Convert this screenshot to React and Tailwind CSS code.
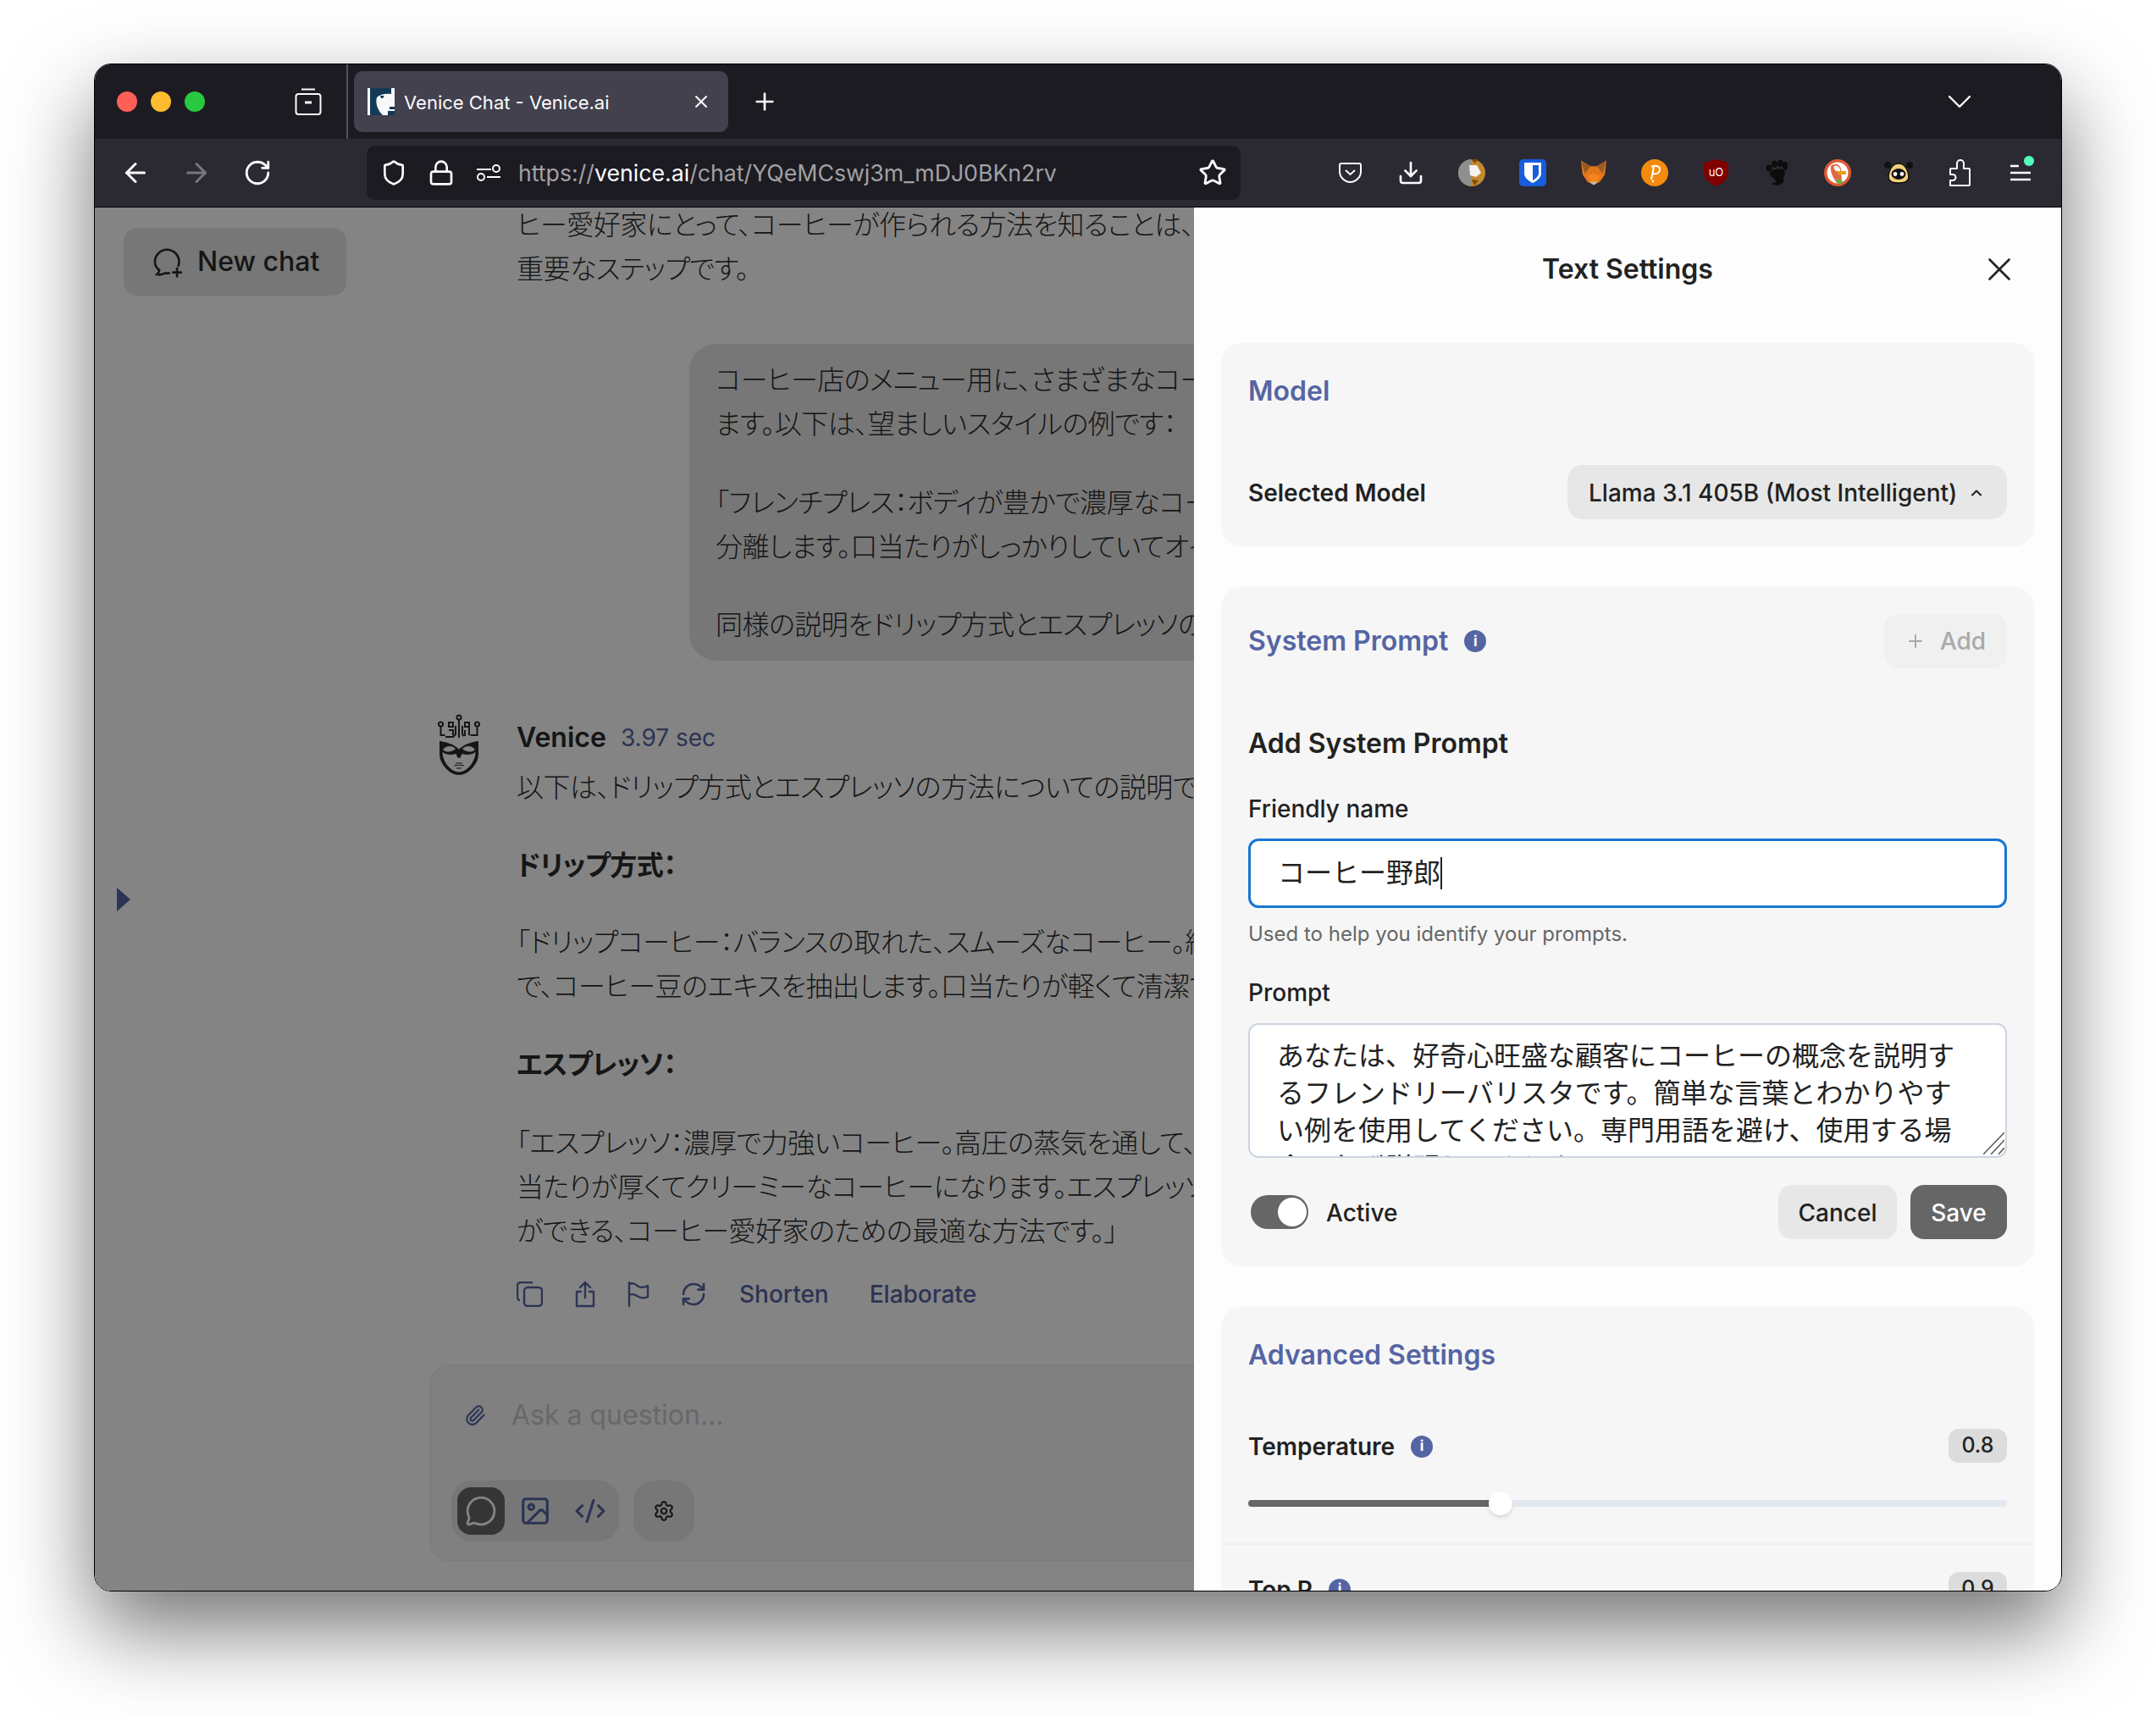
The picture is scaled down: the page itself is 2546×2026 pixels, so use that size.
import React from 'react';
import {
  ArrowLeft, ArrowRight, RotateCw, Shield, Lock, Star, Download, X, Plus, ChevronDown, ChevronUp,
  RefreshCw, Paperclip, MessageCircle, Image, CodeXml, Settings,
} from 'lucide-react';

const SANS = "font-['Inter','Noto_Sans_CJK_JP',sans-serif]";

function MaskLogo() {
  return (
    <svg width="50" height="72" viewBox="0 0 50 72" fill="none" stroke="#2b2b2b" strokeWidth="2">
      <circle cx="25" cy="4" r="2.6" />
      <circle cx="3.500" cy="12" r="2.6" />
      <circle cx="46.500" cy="12" r="2.6" />
      <rect x="13" y="10" width="5" height="5" />
      <rect x="32" y="10" width="5" height="5" />
      <path d="M25 7v21M21 14v10l-3 3h-9M29 14v10l2 2M3.500 15v10h5M46.500 15v10h-8M13 19h5v6M37 15v10M32 19v7" />
      <path d="M3 33c7 1 16 4 22 10 6-6 15-9 22-10v14c0 12-12 24-22 24S3 59 3 47z" fill="#2b2b2b" />
      <path d="M5.500 45c4 3 10 4 16 2 1 3 2 5 3.500 5s2.500-2 3.500-5c6 2 12 1 16-2 0 11-10 23.500-19.500 23.500S5.500 56 5.500 45z" fill="#fdfdfd" stroke="none" />
      <path d="M6 42c4-5 11-5 15-1-4 4-11 5-15 1zM29 41c4-4 11-4 15 1-4 4-11 3-15-1z" fill="#fdfdfd" stroke="none" />
      <path d="M21 58h8M19 61c4-1 8-1 12 0M22 64h6" strokeWidth="1.2" />
    </svg>
  );
}

function TabFavicon() {
  return (
    <svg width="32" height="32" viewBox="0 0 32 32" className="shrink-0">
      <rect width="32" height="32" fill="#f8f9fa" />
      <path d="M3 0h25v7c-6-1-13 0-17 4-2 7 1 15 7 21H3z" fill="#123a57" />
      <path d="M12 10c3-2 6-2 9 0-2 3-6 3-9 0z" fill="#f8f9fa" />
      <path d="M15 9h5l-2 3h-2z" fill="#123a57" />
      <path d="M26 22h6v3h-6zM24 27h8v5h-8z" fill="#123a57" />
      <path d="M0 14l3 2v6l-3-2z" fill="#f8f9fa" />
    </svg>
  );
}

function Lion() {
  return (
    <svg width="32" height="32" viewBox="0 0 32 32">
      <circle cx="16" cy="16" r="16" fill="#c4882e" />
      <path d="M15 0C6 1 0 8 0 16s6 15 15 16z" fill="#8f8f8f" />
      <path d="M13 7h9l5 9-6 5-7-2z" fill="#f3f3f3" />
      <path d="M15 0h8l-3 5zM16 24l8 1-5 6z" fill="#7a4d14" />
    </svg>
  );
}

function Bitwarden() {
  return (
    <svg width="32" height="32" viewBox="0 0 32 32">
      <rect width="32" height="32" rx="5" fill="#175ddc" />
      <path d="M6 4h20v13c0 5-6 9-10 11-4-2-10-6-10-11z" fill="#fff" />
      <path d="M16 7h7v10c0 3-4 6-7 8z" fill="#175ddc" />
    </svg>
  );
}

function Fox() {
  return (
    <svg width="32" height="32" viewBox="0 0 34 46" preserveAspectRatio="none">
      <path d="M1 2l12 10h8L33 2l-2 24-6 12-8 6-8-6-6-12z" fill="#e2761b" />
      <path d="M1 2l12 10-7 12zM33 2L21 12l7 12z" fill="#9a5a24" />
      <path d="M17 24l-8 4 4 10h8l4-10z" fill="#f6851b" />
      <path d="M12 38h10l-5 6z" fill="#c0c0b0" />
    </svg>
  );
}

function Polka() {
  return (
    <svg width="32" height="32" viewBox="0 0 32 32">
      <circle cx="16" cy="16" r="16" fill="#f48b0c" />
      <path d="M12 24l3-15M12 9c6-3 11 0 10 4s-5 5-9 4" fill="none" stroke="#fff" strokeWidth="2" />
      <circle cx="14" cy="26" r="1.300" fill="#fff" />
    </svg>
  );
}

function UBlock() {
  return (
    <svg width="29" height="32" viewBox="0 0 29 32">
      <path d="M14.500 0L29 4v12c0 7-7 13-14.500 16C7 29 0 23 0 16V4z" fill="#800000" />
      <text x="14.500" y="20" textAnchor="middle" fontSize="13" fontFamily="Inter" fill="#fff">uO</text>
    </svg>
  );
}

function Foot() {
  return (
    <svg width="26" height="30" viewBox="0 0 26 44" preserveAspectRatio="none" fill="#0c0c0c">
      <ellipse cx="4" cy="14" rx="3.500" ry="6" />
      <ellipse cx="10.500" cy="7" rx="3.500" ry="6" />
      <ellipse cx="17.500" cy="6" rx="3.500" ry="6" />
      <ellipse cx="23" cy="10" rx="3" ry="7" />
      <path d="M12 16c8-3 13 3 10 11-2 5 0 8-1 11-2 6-12 8-14 2 3 0 6-1 5-4-1-5-8-7-7-13 0-4 3-6 7-7z" />
    </svg>
  );
}

function Duck() {
  return (
    <svg width="32" height="32" viewBox="0 0 32 32">
      <circle cx="16" cy="16" r="16" fill="#de5833" />
      <circle cx="16" cy="16" r="12.500" fill="#fff" />
      <path d="M8 8c4-4 11-3 12 4l1 15-6 1c-4-6-8-12-7-20z" fill="#de5833" opacity="0.9" />
      <path d="M12 8c3-1 6 0 7 4v2h-5c-2-2-3-4-2-6z" fill="#fff" />
      <path d="M15 14h11v4h-9z" fill="#e5a00d" />
      <path d="M15 23l7 3-2 3-5-1z" fill="#4cba3c" />
    </svg>
  );
}

function Goggles() {
  return (
    <svg width="34" height="26" viewBox="0 0 34 26">
      <circle cx="4" cy="4" r="4" fill="#111" />
      <circle cx="30" cy="4" r="4" fill="#111" />
      <path d="M17 2c6 0 9 4 11 10 2 7 2 13-11 13S4 19 6 12C8 6 11 2 17 2z" fill="#f4cf7b" stroke="#111" strokeWidth="1.500" />
      <ellipse cx="17" cy="14.500" rx="8.500" ry="6.500" fill="#111" />
      <circle cx="13" cy="14.500" r="2.400" fill="#fff" />
      <circle cx="21" cy="14.500" r="2.400" fill="#fff" />
    </svg>
  );
}

function Pocket() {
  return (
    <svg width="27" height="24" viewBox="0 0 27 24" fill="none" stroke="#fbfbfe" strokeWidth="2">
      <path d="M3 1h21a2 2 0 012 2v8c0 6-6 12-12.500 12S1 17 1 11V3a2 2 0 012-2z" />
      <path d="M8 9l5.500 5L19 9" />
    </svg>
  );
}

function Sliders() {
  return (
    <svg width="28" height="20" viewBox="0 0 28 20" fill="none" stroke="#fbfbfe" strokeWidth="2">
      <path d="M0 6h17M12 15h16" />
      <circle cx="23" cy="5" r="4" />
      <circle cx="5" cy="15" r="4" />
    </svg>
  );
}

function FirefoxView() {
  return (
    <svg width="32" height="32" viewBox="0 0 32 32" fill="none" stroke="#fbfbfe" strokeWidth="2">
      <path d="M8 1.500h16" />
      <rect x="1.500" y="7" width="29" height="24" rx="3" />
      <path d="M12 17h8" strokeWidth="3" />
    </svg>
  );
}

function ExtensionPiece() {
  return (
    <svg width="28" height="32" viewBox="0 0 28 32" fill="none" stroke="#fbfbfe" strokeWidth="2" strokeLinejoin="round">
      <path d="M3 31h22a1 1 0 001-1V12a1 1 0 00-1-1h-6V5a4 4 0 00-8 0v6H4a1 1 0 00-1 1v6h3a3.500 3.500 0 010 7H3z" />
    </svg>
  );
}

function ChatLine({ bold = false, className = '', children }) {
  return (
    <p className={`h-[52px] text-[32px] leading-[52px] tracking-[-0.5px] whitespace-nowrap text-[#2b2b2b] [font-feature-settings:'palt'] ${bold ? 'font-bold' : 'font-light'} ${className}`}>
      {children}
    </p>
  );
}

function InfoDot() {
  return (
    <span className="flex h-[26px] w-[26px] items-center justify-center rounded-full bg-[#5565a3] text-[17px] font-bold leading-none text-white">i</span>
  );
}

function Card({ children }) {
  return <section className="rounded-[24px] bg-[#f6f6f6] px-[32px]">{children}</section>;
}

function Sidebar() {
  return (
    <aside className="w-[395px] shrink-0 pl-[34px] pt-[24px]">
      <button className="flex h-[80px] w-[263px] items-center gap-[16px] rounded-[16px] bg-[#e4e4e4] pl-[33px] text-[32px] font-medium text-[#2b2b2b]">
        <svg width="38" height="38" viewBox="0 0 24 24" fill="none" stroke="#2b2b2b" strokeWidth="1.7" strokeLinecap="round">
          <path d="M13 20.500c-1 .2-2 .2-3 0-1.500 1-3.500 1.500-6 1 1-1 1.700-2 1.800-3.200C3.500 16.700 2.500 14.500 2.500 12a9 9 0 0118 0c0 1-.2 2-.5 3" />
          <path d="M19 17v6M16 20h6" />
        </svg>
        New chat
      </button>
      <svg width="16" height="28" viewBox="0 0 16 28" className="ml-[-8px] mt-[699px]"><path d="M0 0l16 14L0 28z" fill="#5565a3" /></svg>
    </aside>
  );
}

function ChatColumn() {
  return (
    <main className="min-w-[1400px] flex-1 pl-[103px]">
      <div className="mt-[-5px]">
        <ChatLine>ヒー愛好家にとって、コーヒーが作られる方法を知ることは、</ChatLine>
        <ChatLine>重要なステップです。</ChatLine>
      </div>
      <div className="ml-[204px] mt-[62px] w-[900px] rounded-[32px] bg-[#e4e4e4] pb-[16px] pl-[31px] pt-[17px]">
        <ChatLine>コーヒー店のメニュー用に、さまざまなコーヒーの説明を作成してい</ChatLine>
        <ChatLine>ます。以下は、望ましいスタイルの例です：</ChatLine>
        <ChatLine className="mt-[41px]">「フレンチプレス：ボディが豊かで濃厚なコーヒー。</ChatLine>
        <ChatLine>分離します。口当たりがしっかりしていてオイリーです。</ChatLine>
        <ChatLine className="mt-[40px]">同様の説明をドリップ方式とエスプレッソの方法で</ChatLine>
      </div>
      <div className="relative mt-[64px] flex h-[52px] items-center gap-[17px] pt-[1px]">
        <div className="absolute left-[-93px] top-[-1px]"><MaskLogo /></div>
        <span className="text-[32px] font-semibold text-[#2b2b2b]">Venice</span>
        <span className="text-[28px] text-[#5565a3]">3.97 sec</span>
      </div>
      <ChatLine className="mt-[8px]">以下は、ドリップ方式とエスプレッソの方法についての説明です。</ChatLine>
      <ChatLine bold className="mt-[40px]">ドリップ方式：</ChatLine>
      <ChatLine className="mt-[39px]">「ドリップコーヒー：バランスの取れた、スムーズなコーヒー。紙フィルター</ChatLine>
      <ChatLine>で、コーヒー豆のエキスを抽出します。口当たりが軽くて清潔です。」</ChatLine>
      <ChatLine bold className="mt-[40px]">エスプレッソ：</ChatLine>
      <ChatLine className="mt-[41px]">「エスプレッソ：濃厚で力強いコーヒー。高圧の蒸気を通して、口</ChatLine>
      <ChatLine>当たりが厚くてクリーミーなコーヒーになります。エスプレッソ</ChatLine>
      <ChatLine>ができる、コーヒー愛好家のための最適な方法です。」</ChatLine>
      <div className="mt-[32px] flex h-[32px] items-center text-[28px] font-medium text-[#5565a3]">
        <svg width="31" height="30" viewBox="0 0 31 30" fill="none" stroke="#5565a3" strokeWidth="2.400" strokeLinejoin="round">
          <rect x="9" y="7" width="21" height="22" rx="4" />
          <path d="M4 22a3 3 0 01-3-3V5a4 4 0 014-4h14" />
        </svg>
        <svg width="26" height="32" viewBox="0 0 26 32" fill="none" stroke="#5565a3" strokeWidth="2.400" strokeLinecap="round" strokeLinejoin="round" className="ml-[37px]">
          <path d="M13 20V2M7 8l6-6 6 6M8 13H3v17h20V13h-5" />
        </svg>
        <svg width="26" height="30" viewBox="0 0 26 30" fill="none" stroke="#5565a3" strokeWidth="2.400" strokeLinecap="round" strokeLinejoin="round" className="ml-[37px]">
          <path d="M2 1v28M2 3c4-2 7 0 11 3 4 2 7 1 11-1v13c-4 2-7 2-11 0-4-3-7-4-11-2" />
        </svg>
        <RefreshCw size={32} strokeWidth={2} className="ml-[36px]" />
        <span className="ml-[38px]">Shorten</span>
        <span className="ml-[48px]">Elaborate</span>
      </div>
      <div className="ml-[-103px] mt-[67px] h-[233px] w-[1200px] rounded-[24px] border-2 border-[#f0f0f0] bg-[#f6f6f6] pl-[24px] pt-[28px]">
        <div className="flex h-[60px] items-center gap-[30px]">
          <Paperclip size={26} strokeWidth={2} className="ml-[15px] text-[#5565a3]" />
          <span className="text-[32px] text-[#c4c7cc]">Ask a question...</span>
        </div>
        <div className="mt-[47px] flex gap-[17px]">
          <div className="flex h-[72px] w-[198px] items-center rounded-[24px] bg-[#e4e4e4] pl-[7px]">
            <span className="flex h-[56px] w-[56px] items-center justify-center rounded-[16px] bg-[#666666]">
              <MessageCircle size={38} strokeWidth={1.8} className="text-[#fdfdfd]" />
            </span>
            <Image size={38} strokeWidth={2} className="ml-[17px] text-[#5565a3]" />
            <CodeXml size={38} strokeWidth={2} className="ml-[27px] text-[#5565a3]" />
          </div>
          <div className="flex h-[72px] w-[72px] items-center justify-center rounded-[24px] bg-[#e4e4e4]">
            <Settings size={26} strokeWidth={2} className="text-[#2b2b2b]" />
          </div>
        </div>
      </div>
    </main>
  );
}

function SettingsPanel() {
  return (
    <aside className="absolute bottom-0 right-0 top-0 w-[1024px] overflow-hidden bg-[#fdfdfd] px-[32px] text-[#222222]">
      <header className="relative flex h-[146px] items-center justify-center">
        <h1 className="text-[32px] font-semibold">Text Settings</h1>
        <X size={46} strokeWidth={1.4} className="absolute right-[18px] top-[50px]" />
      </header>
      <div className="mt-[14px] flex flex-col gap-[48px]">
        <Card>
          <h2 className="pt-[37px] text-[32px] font-semibold leading-[40px] text-[#5565a3]">Model</h2>
          <div className="mt-[67px] flex items-center justify-between pb-[32px]">
            <span className="pt-[1px] text-[28px] font-semibold">Selected Model</span>
            <div className="flex h-[64px] w-[519px] items-center rounded-[18px] bg-[#e7e7e7] pl-[25px] pt-[1px] text-[28px] font-medium">
              Llama 3.1 405B (Most Intelligent)
              <ChevronUp size={20} strokeWidth={2.5} className="ml-[13px]" />
            </div>
          </div>
        </Card>
        <Card>
          <div className="flex items-center justify-between pt-[32px]">
            <div className="flex items-center gap-[19px]">
              <h2 className="text-[32px] font-semibold text-[#5565a3]">System Prompt</h2>
              <InfoDot />
            </div>
            <div className="flex h-[64px] w-[145px] items-center justify-center gap-[17px] rounded-[16px] bg-[#f0f0f0] text-[28px] font-medium text-[#a9a9a9]">
              <Plus size={24} strokeWidth={2} />
              Add
            </div>
          </div>
          <h3 className="mt-[69px] text-[32px] font-semibold leading-[40px]">Add System Prompt</h3>
          <p className="mt-[39px] text-[28px] font-medium leading-[36px]">Friendly name</p>
          <div className="mt-[17px] flex h-[82px] items-center rounded-[12px] border-[3px] border-[#1976d2] bg-white pl-[32px] text-[32px]">
            コーヒー野郎<span className="h-[38px] w-[2px] bg-[#222222]" />
          </div>
          <p className="mt-[15px] text-[24px] leading-[32px] text-[#666666]">Used to help you identify your prompts.</p>
          <p className="mt-[35px] text-[28px] font-medium leading-[36px]">Prompt</p>
          <div className="relative mt-[18px]">
            <textarea
              readOnly
              className="block h-[159px] w-full resize-none overflow-hidden rounded-[12px] border-2 border-[#cbd5e1] bg-white pb-0 pl-[32px] pr-[50px] pt-[15px] text-[32px] leading-[44px] outline-none"
              value="あなたは、好奇心旺盛な顧客にコーヒーの概念を説明するフレンドリーバリスタです。簡単な言葉とわかりやすい例を使用してください。専門用語を避け、使用する場合は必ず説明してください。"
            />
            <svg width="25" height="26" viewBox="0 0 25 26" stroke="#555555" strokeWidth="1.500" className="absolute bottom-[4px] right-[3px]">
              <path d="M0 26L25 0M9 26L25 9M18 26L25 18" />
            </svg>
          </div>
          <div className="mt-[32px] flex items-center pb-[32px]">
            <div className="ml-[3px] flex h-[40px] w-[68px] items-center justify-end rounded-full bg-[#666666] pr-[2px]">
              <span className="h-[34px] w-[34px] rounded-full bg-white" />
            </div>
            <span className="ml-[21px] pt-[1px] text-[28px] font-medium">Active</span>
            <button className="ml-auto h-[64px] w-[140px] rounded-[16px] bg-[#e7e7e7] pt-[1px] text-[28px] font-medium">Cancel</button>
            <button className="ml-[16px] h-[64px] w-[114px] rounded-[16px] bg-[#666666] pt-[1px] text-[28px] font-medium text-white">Save</button>
          </div>
        </Card>
        <Card>
          <h2 className="pt-[37px] text-[32px] font-semibold leading-[40px] text-[#5565a3]">Advanced Settings</h2>
          <div className="mt-[67px] flex items-center">
            <span className="pt-[2px] text-[28px] font-semibold leading-[38px]">Temperature</span>
            <span className="ml-[19px] pt-[1px]"><InfoDot /></span>
            <span className="ml-auto flex h-[40px] w-[69px] items-center justify-center rounded-[12px] bg-[#dcdcdc] text-[25px] font-medium">0.8</span>
          </div>
          <div className="relative mt-[44px] h-[8px] rounded-full bg-[#e2e8f0]">
            <div className="h-full w-[298px] rounded-full bg-[#666666]" />
            <span className="absolute left-[284px] top-[-10px] h-[28px] w-[28px] rounded-full bg-white shadow-md" />
          </div>
          <div className="mx-[-32px] mt-[43px] h-[2px] bg-[#f0f0f0]" />
          <div className="mt-[32px] flex items-center">
            <span className="pt-[2px] text-[28px] font-semibold leading-[38px]">Top P</span>
            <span className="ml-[19px] pt-[1px]"><InfoDot /></span>
            <span className="ml-auto flex h-[40px] w-[69px] items-center justify-center rounded-[12px] bg-[#dcdcdc] text-[25px] font-medium">0.9</span>
          </div>
        </Card>
      </div>
    </aside>
  );
}

export default function App() {
  return (
    <div className={`h-[2026px] w-[2546px] overflow-hidden bg-white pl-[111px] pt-[75px] ${SANS}`}>
      <div className="relative flex h-[1804px] w-[2324px] flex-col overflow-hidden rounded-[20px] border border-black shadow-[0_44px_100px_rgba(0,0,0,0.55)]">
        {/* tab strip */}
        <div className="flex h-[88px] shrink-0 items-center bg-[#1c1b22] text-[#fbfbfe]">
          <div className="ml-[26px] flex gap-[16px]">
            <span className="h-[24px] w-[24px] rounded-full bg-[#ff5f57]" />
            <span className="h-[24px] w-[24px] rounded-full bg-[#febc2e]" />
            <span className="h-[24px] w-[24px] rounded-full bg-[#28c840]" />
          </div>
          <span className="ml-[106px]"><FirefoxView /></span>
          <span className="ml-[29px] w-[2px] self-stretch bg-[#55545c]" />
          <div className="ml-[7px] flex h-[72px] w-[442px] items-center rounded-[10px] bg-[#42414d] pl-[16px] pr-[20px]">
            <TabFavicon />
            <span className="ml-[11px] pt-[2px] text-[22px]">Venice Chat - Venice.ai</span>
            <X size={24} strokeWidth={2} className="ml-auto" />
          </div>
          <Plus size={32} strokeWidth={2} className="ml-[27px]" />
          <ChevronDown size={48} strokeWidth={1.2} className="ml-auto mr-[96px]" />
        </div>
        {/* nav bar */}
        <div className="flex h-[81px] shrink-0 items-center border-b border-black bg-[#2b2a33] pl-[30px] text-[#fbfbfe]">
          <ArrowLeft size={36} strokeWidth={2} />
          <ArrowRight size={36} strokeWidth={2} className="ml-[36px] text-[#77767c]" />
          <RotateCw size={34} strokeWidth={2} className="ml-[37px]" />
          <div className="ml-[112px] flex h-[64px] w-[1032px] shrink-0 items-center rounded-[10px] bg-[#1c1b22] pl-[16px] pr-[16px]">
            <Shield size={32} strokeWidth={2} />
            <Lock size={32} strokeWidth={2} className="ml-[24px]" />
            <span className="ml-[26px]"><Sliders /></span>
            <span className="ml-[21px] text-[26.7px] text-[#a1a1a5]">https://<span className="text-[#fbfbfe]">venice.ai</span>/chat/YQeMCswj3m_mDJ0BKn2rv</span>
            <Star size={34} strokeWidth={2} className="ml-auto" />
          </div>
          <div className="ml-[93px] flex items-center">
            {[<Pocket />, <Download size={32} strokeWidth={2} />, <Lion />, <Bitwarden />, <Fox />, <Polka />, <UBlock />, <Foot />, <Duck />, <Goggles />, <ExtensionPiece />].map((icon, i) => (
              <span key={i} className="flex h-[48px] w-[72px] items-center justify-center">{icon}</span>
            ))}
            <span className="relative flex h-[48px] w-[72px] items-center justify-center">
              <svg width="24" height="20" viewBox="0 0 24 20" stroke="#fbfbfe" strokeWidth="2.500"><path d="M0 2h10M0 10h24M0 18h24" /></svg>
              <span className="absolute left-[40px] top-[4px] h-[12px] w-[12px] rounded-full bg-[#54ffbd]" />
            </span>
          </div>
        </div>
        {/* page */}
        <div className="relative flex flex-1 overflow-hidden bg-[#fdfdfd]">
          <Sidebar />
          <ChatColumn />
          <div className="absolute inset-0 bg-black/48" />
          <SettingsPanel />
        </div>
      </div>
    </div>
  );
}
